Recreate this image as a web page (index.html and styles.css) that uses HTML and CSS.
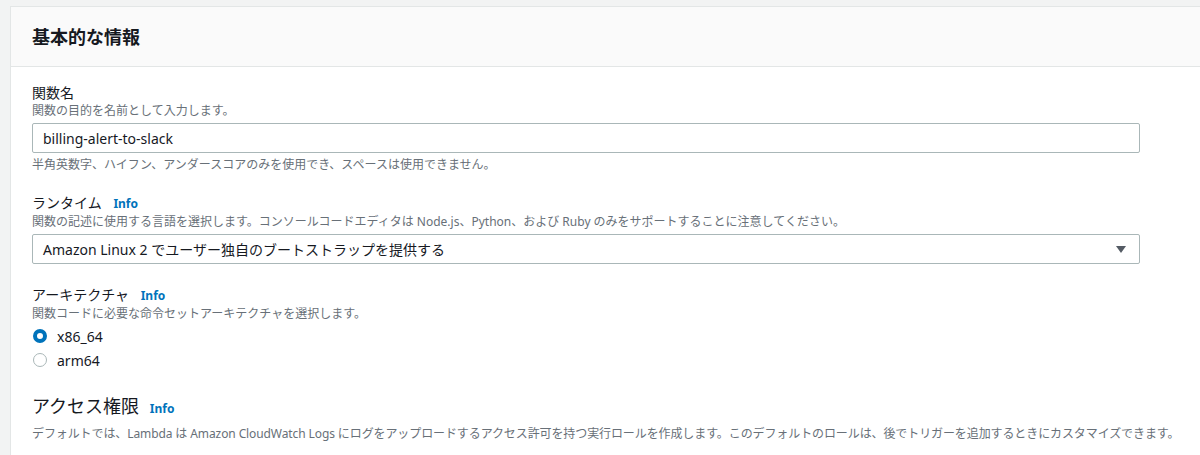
FILE: index.html
```html
<!DOCTYPE html>
<html lang="ja">
<head>
    <meta charset="UTF-8">
    <meta name="viewport" content="width=device-width, initial-scale=1.0">
    <title>関数の作成</title>
    <link rel="stylesheet" href="styles.css">
</head>
<body>

<div class="container">
    <div class="panel-header">
        <h2>基本的な情報</h2>
    </div>

    <div class="panel-body">
        <!-- 関数名 -->
        <div class="field">
            <label class="field-label">関数名</label>
            <p class="field-desc">関数の目的を名前として入力します。</p>
            <input type="text" class="text-input" value="billing-alert-to-slack">
            <p class="field-hint">半角英数字、ハイフン、アンダースコアのみを使用でき、スペースは使用できません。</p>
        </div>

        <!-- ランタイム -->
        <div class="field">
            <label class="field-label">ランタイム <a href="#" class="info-link">Info</a></label>
            <p class="field-desc">関数の記述に使用する言語を選択します。コンソールコードエディタは Node.js、Python、および Ruby のみをサポートすることに注意してください。</p>
            <div class="select-box">
                <span>Amazon Linux 2 でユーザー独自のブートストラップを提供する</span>
                <span class="caret"></span>
            </div>
        </div>

        <!-- アーキテクチャ -->
        <div class="field field-arch">
            <label class="field-label">アーキテクチャ <a href="#" class="info-link">Info</a></label>
            <p class="field-desc">関数コードに必要な命令セットアーキテクチャを選択します。</p>
            <div class="radio-group">
                <label class="radio-row"><span class="radio checked"></span>x86_64</label>
                <label class="radio-row"><span class="radio"></span>arm64</label>
            </div>
        </div>

        <!-- アクセス権限 -->
        <div class="section">
            <h3>アクセス権限 <a href="#" class="info-link">Info</a></h3>
            <p class="field-desc nowrap">デフォルトでは、Lambda は Amazon CloudWatch Logs にログをアップロードするアクセス許可を持つ実行ロールを作成します。このデフォルトのロールは、後でトリガーを追加するときにカスタマイズできます。</p>
        </div>
    </div>
</div>

</body>
</html>
```

FILE: styles.css
```css
body {
    font-family: "Noto Sans", "Noto Sans CJK JP", sans-serif;
    margin: 0;
    padding: 6px 0 0 10px;
    background-color: #f2f3f3;
    color: #16191f;
    overflow: hidden;
}

.container {
    background-color: white;
    border: 1px solid #e3e6e6;
    border-right: none;
    border-bottom: none;
    width: 1200px;
    height: 449px;
    overflow: hidden;
}

.panel-header {
    background-color: #fafafa;
    border-bottom: 1px solid #e3e6e6;
    height: 59px;
    display: flex;
    align-items: center;
    padding: 0 21px;
}

.panel-header h2 {
    font-size: 18px;
    font-weight: 700;
    margin: 0;
    line-height: 24px;
}

.panel-body {
    padding: 16px 21px;
}

.field {
    margin-bottom: 20px;
}

.field-arch {
    margin-top: 21px;
    margin-bottom: 22px;
}

.field-label {
    display: block;
    font-size: 14px;
    line-height: 20px;
}

.info-link {
    color: #0073bb;
    font-size: 12px;
    font-weight: 700;
    text-decoration: none;
    margin-left: 8px;
}

.field-desc {
    font-size: 12px;
    line-height: 16px;
    color: #687078;
    margin: 0;
}

.nowrap {
    white-space: nowrap;
    letter-spacing: -0.1px;
}

.field-hint {
    font-size: 12px;
    line-height: 16px;
    color: #687078;
    margin: 4px 0 0;
}

.text-input {
    display: block;
    box-sizing: border-box;
    width: 1108px;
    height: 30px;
    margin-top: 4px;
    padding: 0 10px;
    border: 1px solid #aab7b8;
    border-radius: 2px;
    font-family: inherit;
    font-size: 14px;
    color: #16191f;
    outline: none;
}

.select-box {
    box-sizing: border-box;
    width: 1108px;
    height: 30px;
    margin-top: 4px;
    padding: 0 13px 0 10px;
    border: 1px solid #aab7b8;
    border-radius: 2px;
    font-size: 14px;
    display: flex;
    align-items: center;
    justify-content: space-between;
}

.caret {
    width: 0;
    height: 0;
    border-left: 5px solid transparent;
    border-right: 5px solid transparent;
    border-top: 7px solid #545b64;
}

.radio-group {
    margin-top: 2px;
}

.radio-row {
    display: flex;
    align-items: center;
    height: 24px;
    font-size: 14px;
}

.radio {
    box-sizing: border-box;
    width: 14px;
    height: 14px;
    border-radius: 50%;
    border: 1px solid #aab7b8;
    margin: 0 10px 0 1px;
}

.radio.checked {
    border: 4px solid #0073bb;
}

.section h3 {
    font-size: 18px;
    font-weight: 400;
    line-height: 24px;
    margin: 0 0 5px;
}

.section .info-link {
    margin-left: 6px;
}
```
